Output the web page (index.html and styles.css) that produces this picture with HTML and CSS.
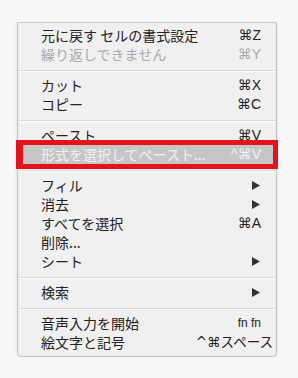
FILE: index.html
```html
<!DOCTYPE html>
<html lang="ja">
<head>
<meta charset="utf-8">
<link rel="stylesheet" href="styles.css">
</head>
<body>
<div class="menu">
  <div class="item"><span class="label">元に戻す セルの書式設定</span><span class="key">⌘Z</span></div>
  <div class="item disabled"><span class="label">繰り返しできません</span><span class="key">⌘Y</span></div>
  <div class="sep"></div>
  <div class="item"><span class="label">カット</span><span class="key">⌘X</span></div>
  <div class="item"><span class="label">コピー</span><span class="key">⌘C</span></div>
  <div class="sep"></div>
  <div class="item"><span class="label">ペースト</span><span class="key">⌘V</span></div>
  <div class="item selected"><span class="label">形式を選択してペースト...</span><span class="key">^⌘V</span><span class="mark"></span></div>
  <div class="sep"></div>
  <div class="item"><span class="label">フィル</span><svg class="arrow" width="8" height="9" viewBox="0 0 8 9"><polygon points="0,0 8,4.5 0,9" /></svg></div>
  <div class="item"><span class="label">消去</span><svg class="arrow" width="8" height="9" viewBox="0 0 8 9"><polygon points="0,0 8,4.5 0,9" /></svg></div>
  <div class="item"><span class="label">すべてを選択</span><span class="key">⌘A</span></div>
  <div class="item"><span class="label">削除...</span></div>
  <div class="item"><span class="label">シート</span><svg class="arrow" width="8" height="9" viewBox="0 0 8 9"><polygon points="0,0 8,4.5 0,9" /></svg></div>
  <div class="sep"></div>
  <div class="item"><span class="label">検索</span><svg class="arrow" width="8" height="9" viewBox="0 0 8 9"><polygon points="0,0 8,4.5 0,9" /></svg></div>
  <div class="sep"></div>
  <div class="item"><span class="label">音声入力を開始</span><span class="key small">fn fn</span></div>
  <div class="item"><span class="label">絵文字と記号</span><span class="key wide">^⌘スペース</span></div>
</div>
</body>
</html>
```
FILE: styles.css
```css
html, body {
  margin: 0;
  padding: 0;
  background: #f8f8f8;
}
body {
  padding: 22px 0 0 17px;
  font-family: "Noto Sans CJK JP", "Noto Sans", sans-serif;
}
.menu {
  width: 258px;
  background: #f0f0f0;
  border: 1px solid #c2c2c2;
  border-top-color: #cfcfcf;
  border-radius: 0 0 5px 5px;
  box-shadow: 0 1px 3px rgba(0,0,0,0.12);
  padding: 3px 0 4px;
  display: flex;
  flex-direction: column;
}
.item {
  position: relative;
  height: 19px;
  display: flex;
  align-items: center;
  justify-content: space-between;
  padding: 0 15px 0 23px;
  font-size: 14px;
  color: #222;
  line-height: 19px;
}
.label {
  white-space: nowrap;
}
.key {
  font-family: "Liberation Sans", "DejaVu Sans", "Noto Sans CJK JP", sans-serif;
  font-size: 14px;
  white-space: nowrap;
}
.key.small {
  font-size: 12px;
}
.key.wide {
  margin-right: -12px;
  font-family: "DejaVu Sans", "Noto Sans CJK JP", sans-serif;
  font-size: 13.5px;
}
.disabled {
  color: #a9a9a9;
}
.selected {
  background: #c6c6c6;
  color: #eef3f6;
}
.mark {
  position: absolute;
  left: -2px;
  right: -2px;
  top: -5px;
  bottom: -5px;
  border: 5px solid #e3131d;
  border-left-width: 7px;
}
.arrow {
  fill: #333;
  margin-right: 1px;
}
.sep {
  height: 12px;
  display: flex;
  align-items: center;
}
.sep::before {
  content: "";
  display: block;
  width: 100%;
  height: 1px;
  background: #d9d9d9;
  box-shadow: 0 1px 0 #fbfbfb;
}
```
